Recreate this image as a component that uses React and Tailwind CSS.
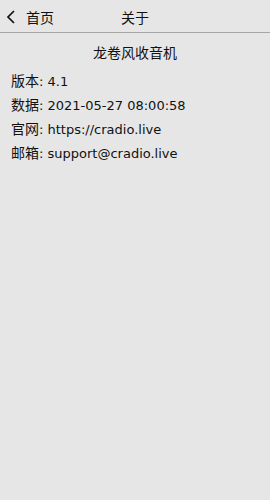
const CJK = { fontFamily: '"Noto Sans CJK SC", "Noto Sans", sans-serif' };
const LAT = { fontFamily: '"DejaVu Sans", "Noto Sans CJK SC", sans-serif' };

function Row({ label, value }) {
  return (
    <div className="flex items-baseline h-[24px] leading-[24px]">
      <span className="text-[14px]" style={CJK}>{label}</span>
      <span className="text-[13px] whitespace-pre" style={LAT}>{": " + value}</span>
    </div>
  );
}

export default function App() {
  return (
    <div className="w-[270px] h-[500px] bg-[#e6e6e6] text-[#111111] flex flex-col" style={CJK}>
      <div className="h-[33px] pt-[2px] flex items-center relative border-b border-[#a6a6a6] shrink-0">
        <div className="flex items-center pl-[6px]">
          <svg width="10" height="14" viewBox="0 0 10 14" className="mr-[10px]">
            <path d="M8 1 L2 7 L8 13" fill="none" stroke="#111111" strokeWidth="1.7" />
          </svg>
          <span className="text-[14px] leading-none">首页</span>
        </div>
        <div className="absolute left-0 right-0 text-center text-[14px] leading-none pointer-events-none">关于</div>
      </div>
      <div className="flex flex-col px-[11px] pt-[7px]">
        <div className="text-center text-[14px] leading-[24px] mb-[4px]">龙卷风收音机</div>
        <Row label="版本" value="4.1" />
        <Row label="数据" value="2021-05-27 08:00:58" />
        <Row label="官网" value="https://cradio.live" />
        <Row label="邮箱" value="support@cradio.live" />
      </div>
    </div>
  );
}
